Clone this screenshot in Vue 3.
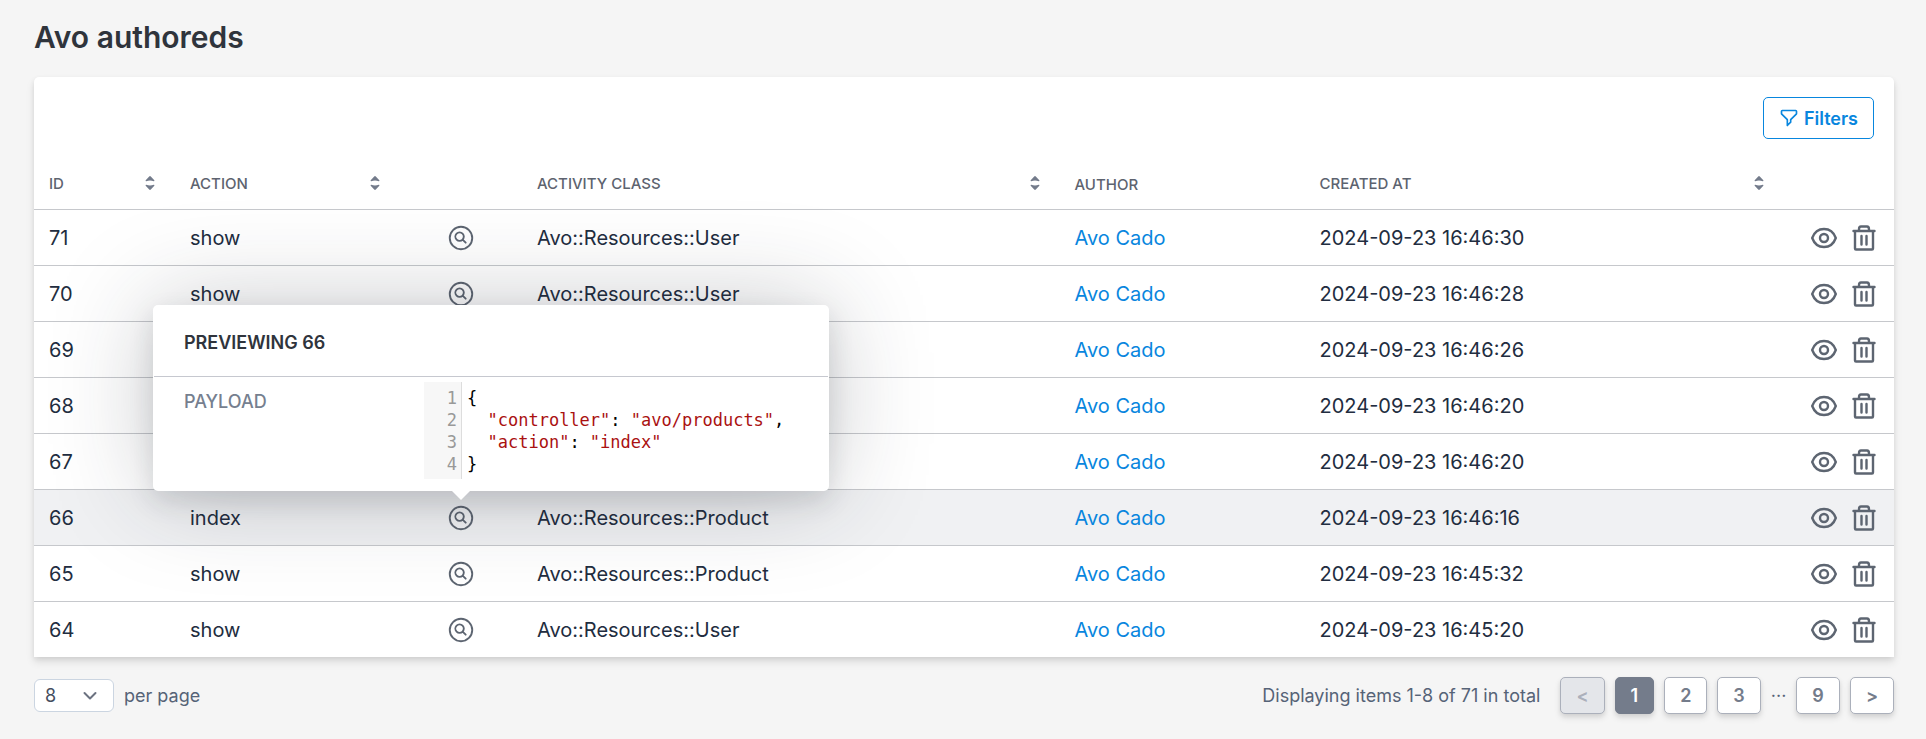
<script setup>
import { ref } from 'vue'

const columns = [
  { key: 'id', label: 'ID', sortable: true },
  { key: 'action', label: 'Action', sortable: true },
  { key: 'preview', label: '' },
  { key: 'class', label: 'Activity class', sortable: true },
  { key: 'author', label: 'Author' },
  { key: 'created', label: 'Created at', sortable: true },
  { key: 'controls', label: '' },
]

const rows = [
  { id: 71, action: 'show', resource: 'User', at: '16:46:30' },
  { id: 70, action: 'show', resource: 'User', at: '16:46:28' },
  { id: 69, action: 'show', resource: 'User', at: '16:46:26' },
  { id: 68, action: 'show', resource: 'User', at: '16:46:20' },
  { id: 67, action: 'index', resource: 'User', at: '16:46:20' },
  { id: 66, action: 'index', resource: 'Product', at: '16:46:16' },
  { id: 65, action: 'show', resource: 'Product', at: '16:45:32' },
  { id: 64, action: 'show', resource: 'User', at: '16:45:20' },
]

const previewed = ref(66)
const perPage = ref('8')

const payload = [
  [{ text: '{' }],
  [
    { text: '  ' },
    { text: '"controller"', string: true },
    { text: ': ' },
    { text: '"avo/products"', string: true },
    { text: ',' },
  ],
  [
    { text: '  ' },
    { text: '"action"', string: true },
    { text: ': ' },
    { text: '"index"', string: true },
  ],
  [{ text: '}' }],
]
</script>

<template>
  <main class="page">
    <h1 class="title">Avo authoreds</h1>

    <section class="card">
      <div class="toolbar">
        <button type="button" class="filters">
          <svg class="funnel" viewBox="0 0 24 24" aria-hidden="true">
            <path d="M3 4a1 1 0 011-1h16a1 1 0 011 1v2.586a1 1 0 01-.293.707l-6.414 6.414a1 1 0 00-.293.707V17l-4 4v-6.586a1 1 0 00-.293-.707L3.293 7.293A1 1 0 013 6.586V4z" />
          </svg>
          Filters
        </button>
      </div>

      <table class="grid">
        <colgroup>
          <col v-for="c in columns" :key="c.key" :class="'col-' + c.key" />
        </colgroup>
        <thead>
          <tr>
            <th v-for="c in columns" :key="c.key" scope="col">
              <a v-if="c.sortable" href="#" class="sort">
                {{ c.label }}
                <svg class="sort-icon" viewBox="0 0 10 16" aria-hidden="true">
                  <path d="M1.2 6.2Q.2 6.2.7 5.2L4.2 1.4Q5 .7 5.8 1.4L9.3 5.2Q9.8 6.2 8.8 6.2Q5 4.6 1.2 6.2Z" />
                  <path d="M1.2 9.8Q.2 9.8.7 10.8L4.2 14.6Q5 15.3 5.8 14.6L9.3 10.8Q9.8 9.8 8.8 9.8Q5 11.4 1.2 9.8Z" />
                </svg>
              </a>
              <template v-else>{{ c.label }}</template>
            </th>
          </tr>
        </thead>
        <tbody>
          <tr v-for="row in rows" :key="row.id" :class="{ active: row.id === previewed }">
            <td>{{ row.id }}</td>
            <td>{{ row.action }}</td>
            <td class="preview-cell">
              <button type="button" class="icon-button" :aria-label="'Preview ' + row.id" @click="previewed = row.id">
                <svg class="magnifier" viewBox="0 0 24 24" aria-hidden="true">
                  <path d="m15.75 15.75-2.489-2.489m0 0a3.375 3.375 0 1 0-4.773-4.773 3.375 3.375 0 0 0 4.774 4.774ZM21 12a9 9 0 1 1-18 0 9 9 0 0 1 18 0Z" />
                </svg>
              </button>

              <div v-if="row.id === previewed" class="popover" role="dialog" aria-label="Record preview">
                <h2 class="popover-title">Previewing {{ row.id }}</h2>
                <div class="popover-body">
                  <div class="field-label">Payload</div>
                  <div class="code">
                    <div class="gutter">
                      <div v-for="(line, i) in payload" :key="i">{{ i + 1 }}</div>
                    </div>
                    <div class="lines">
                      <div v-for="(line, i) in payload" :key="i"><span v-for="(t, j) in line" :key="j" :class="{ string: t.string }">{{ t.text }}</span></div>
                    </div>
                  </div>
                </div>
              </div>
            </td>
            <td>Avo::Resources::{{ row.resource }}</td>
            <td><a href="#" class="author">Avo Cado</a></td>
            <td>2024-09-23 {{ row.at }}</td>
            <td>
              <div class="controls">
                <a href="#" class="icon-button" :aria-label="'View ' + row.id">
                  <svg class="eye" viewBox="0 0 26 26" aria-hidden="true">
                    <path d="M1.2 13C3.2 7.500 7.600 4 13 4S22.800 7.500 24.800 13C22.800 18.500 18.400 22 13 22S3.200 18.500 1.200 13Z" />
                    <circle cx="13" cy="13" r="4" />
                  </svg>
                </a>
                <button type="button" class="icon-button" :aria-label="'Delete ' + row.id">
                  <svg class="trash" viewBox="0 0 24 26" aria-hidden="true">
                    <path d="M1.500 6H22.500M3 6V23.500Q3 24.500 4 24.500H20Q21 24.500 21 23.500V6M7 6V4.500Q7 1.500 9 1.500H15Q17 1.500 17 4.500V6M9.500 11V19.500M14.500 11V19.500" />
                  </svg>
                </button>
              </div>
            </td>
          </tr>
        </tbody>
      </table>
    </section>

    <footer class="footer">
      <div class="per-page">
        <span class="select-wrap">
          <select id="per-page" v-model="perPage">
            <option>8</option>
            <option>24</option>
            <option>48</option>
          </select>
          <svg class="chevron" viewBox="0 0 14 10" aria-hidden="true"><path d="M1.500 2L7 7.500L12.500 2" /></svg>
        </span>
        <label for="per-page">per page</label>
      </div>

      <nav class="pager" aria-label="Pagination">
        <span class="summary">Displaying items 1-8 of 71 in total</span>
        <button type="button" class="page-button" disabled>&lt;</button>
        <button type="button" class="page-button current" aria-current="page">1</button>
        <button type="button" class="page-button">2</button>
        <button type="button" class="page-button">3</button>
        <span class="gap">···</span>
        <button type="button" class="page-button">9</button>
        <button type="button" class="page-button">&gt;</button>
      </nav>
    </footer>
  </main>
</template>

<style>
body {
  background: #f5f5f5;
}
</style>

<style scoped>
* {
  box-sizing: border-box;
}

.page {
  padding: 19px 32px 26px 34px;
  font-family: Inter, 'Liberation Sans', sans-serif;
  font-size: 18px;
  color: #222d40;
}

.title {
  margin: 0 0 22px;
  font-size: 30px;
  line-height: 36px;
  font-weight: 600;
  color: #2f343c;
}

button,
select {
  margin: 0;
  font-family: inherit;
  font-size: inherit;
  cursor: pointer;
}

a {
  text-decoration: none;
}

svg {
  display: block;
  flex: none;
}

.card {
  background: #fff;
  border-radius: 5px 5px 0 0;
  box-shadow: 0 5px 8px rgba(0, 0, 0, 0.1), 0 2px 5px rgba(0, 0, 0, 0.07);
}

.toolbar {
  display: flex;
  justify-content: flex-end;
  padding: 20px;
}

.filters {
  display: flex;
  align-items: center;
  gap: 5px;
  height: 42px;
  padding: 0 15px;
  border: 1px solid #0886de;
  border-radius: 5px;
  background: #fff;
  color: #0886de;
  font-weight: 600;
}

.funnel {
  width: 20px;
  height: 20px;
  fill: none;
  stroke: currentColor;
  stroke-width: 2;
  stroke-linecap: round;
  stroke-linejoin: round;
}

.grid {
  width: 100%;
  table-layout: fixed;
  border-collapse: separate;
  border-spacing: 0;
}

.col-id { width: 141px; }
.col-action { width: 225px; }
.col-preview { width: 122px; }
.col-class { width: 28.9%; }
.col-author { width: 245px; }
.col-controls { width: 110px; }

th {
  height: 51px;
  padding: 0 15px;
  border-bottom: 1px solid #c6c8cc;
  text-align: left;
  font-size: 15px;
  font-weight: 500;
  color: #5d636f;
  text-transform: uppercase;
}

.sort {
  display: flex;
  align-items: center;
  justify-content: space-between;
  padding-bottom: 2px;
  color: inherit;
}

.sort-icon {
  width: 10px;
  height: 16px;
  margin-right: 5px;
  fill: #737b8b;
}

td {
  height: 56px;
  padding: 0 15px;
  border-bottom: 1px solid #c6c8cc;
  font-size: 20px;
  white-space: nowrap;
}

tbody tr:last-child td {
  height: 55px;
  border-bottom: 0;
}

.active td {
  background: #f0f1f3;
}

.author {
  color: #0886de;
}

.icon-button {
  display: flex;
  padding: 0;
  border: 0;
  background: none;
  color: #5d6571;
}

.preview-cell {
  position: relative;
}

.preview-cell > .icon-button {
  margin: 0 auto;
}

.magnifier,
.eye,
.trash {
  fill: none;
  stroke: currentColor;
  stroke-linecap: round;
  stroke-linejoin: round;
}

.magnifier {
  width: 30px;
  height: 30px;
  stroke-width: 1.5;
}

.eye {
  width: 26px;
  height: 26px;
  stroke-width: 2.4;
}

.trash {
  width: 24px;
  height: 26px;
  stroke-width: 2.4;
}

.controls {
  display: flex;
  align-items: center;
  justify-content: flex-end;
  gap: 15px;
  padding-right: 3px;
}

.popover {
  position: absolute;
  z-index: 1;
  left: -247px;
  bottom: 54px;
  width: 676px;
  padding: 0 1px 12px;
  border-radius: 5px;
  background: #fff;
  box-shadow: 0 0 100px rgba(34, 39, 50, 0.25), 0 10px 26px rgba(34, 39, 50, 0.13);
}

.popover::after {
  content: '';
  position: absolute;
  top: 100%;
  left: 299px;
  border: 9px solid transparent;
  border-top-color: #fff;
  border-bottom: 0;
}

.popover-title {
  margin: 0;
  padding: 25px 30px 20px;
  border-bottom: 1px solid #c6c8cf;
  font-size: 18px;
  line-height: 26px;
  font-weight: 600;
  color: #2f343c;
  text-transform: uppercase;
}

.popover-body {
  display: flex;
  padding: 5px 0 0 30px;
}

.field-label {
  width: 240px;
  padding-top: 8px;
  line-height: 24px;
  font-size: 18px;
  font-weight: 500;
  color: #767f8f;
  text-transform: uppercase;
}

.code {
  display: flex;
  font-family: 'DejaVu Sans Mono', monospace;
  font-size: 17px;
  line-height: 22px;
  color: #000;
}

.gutter {
  width: 38px;
  padding: 5px 4px 4px 0;
  border-right: 1px solid #ddd;
  background: #f7f7f7;
  color: #999;
  text-align: right;
}

.lines {
  padding: 5px 5px 4px;
  white-space: pre;
}

.string {
  color: #a11;
}

.footer {
  display: flex;
  align-items: center;
  justify-content: space-between;
  padding-top: 20px;
  color: #566377;
}

.per-page {
  display: flex;
  align-items: center;
  gap: 10px;
}

.select-wrap {
  position: relative;
}

select {
  display: block;
  width: 80px;
  height: 33px;
  padding: 0 10px;
  appearance: none;
  border: 1px solid #cbd5e1;
  border-radius: 6px;
  background: #fff;
  color: #454e60;
}

.chevron {
  position: absolute;
  top: 12px;
  right: 17px;
  width: 14px;
  height: 10px;
  fill: none;
  stroke: #6b7280;
  stroke-width: 2;
  stroke-linecap: round;
  stroke-linejoin: round;
  pointer-events: none;
}

.pager {
  display: flex;
  align-items: center;
  gap: 10px;
}

.summary {
  margin-right: 10px;
}

.page-button {
  height: 37px;
  padding: 0 15px;
  border: 1px solid #abb0bb;
  border-radius: 5px;
  background: #fff;
  box-shadow: 0 4px 6px rgba(0, 0, 0, 0.1), 0 2px 4px rgba(0, 0, 0, 0.06);
  color: #747c8b;
  font-weight: 600;
}

.page-button:disabled {
  background: #e4e6ea;
  color: #abb0bb;
}

.page-button.current {
  border-color: #747c8b;
  background: #747c8b;
  color: #fff;
}
</style>
